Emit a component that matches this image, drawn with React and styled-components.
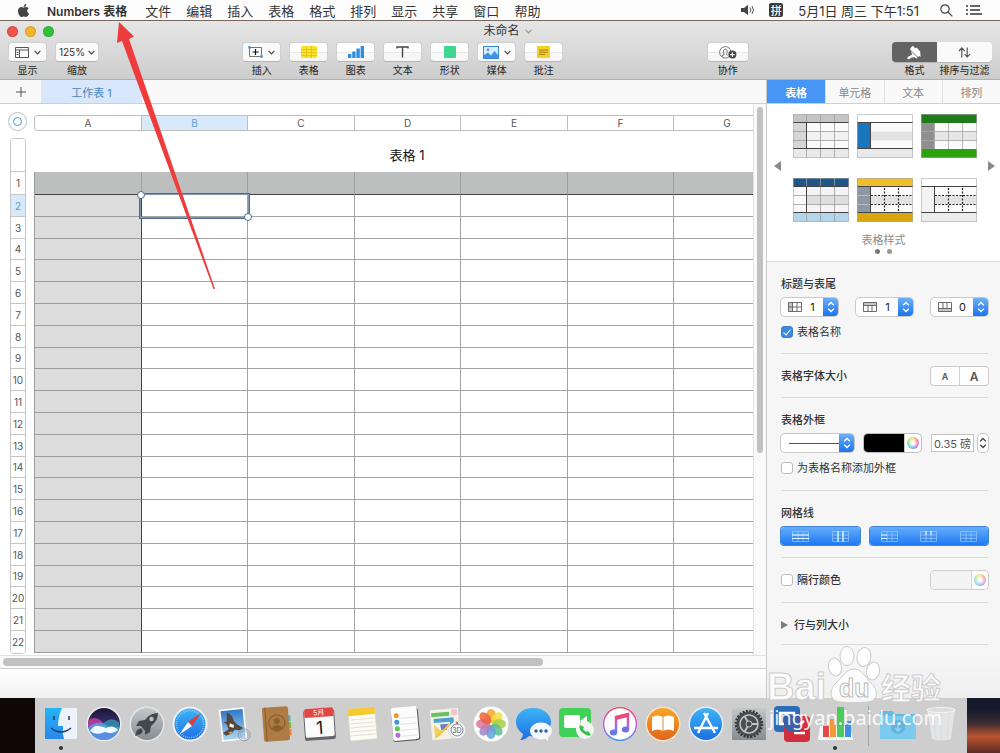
import React, {useState} from 'react';
import styled, {createGlobalStyle} from 'styled-components';
import {FaApple} from 'react-icons/fa';

const MENUS = ['文件', '编辑', '插入', '表格', '格式', '排列', '显示', '共享', '窗口', '帮助'];
const COLUMNS = [
  {name: 'A', width: 107},
  {name: 'B', width: 106},
  {name: 'C', width: 107},
  {name: 'D', width: 106},
  {name: 'E', width: 107},
  {name: 'F', width: 106},
  {name: 'G', width: 107},
];
// the 125% zoom makes every fifth row one pixel shorter
const rowHeight = (n) => (n === 1 ? 23 : n % 5 === 4 ? 21 : 22);
const ROWS = Array.from({length: 22}, (_, i) => ({n: i + 1, height: rowHeight(i + 1)}));

const Chevron = ({color = '#444'}) => (
  <svg width="7" height="5" viewBox="0 0 7 5" fill="none" stroke={color} strokeWidth="1.2">
    <path d="M.6 .8 3.5 3.8 6.4 .8"/>
  </svg>
);

const UpDown = ({color = '#fff'}) => (
  <svg width="8" height="12" viewBox="0 0 8 12" fill="none" stroke={color} strokeWidth="1.3">
    <path d="M1.2 4.3 4 1.5 6.8 4.3M1.2 7.7 4 10.5 6.8 7.7"/>
  </svg>
);

const ICONS = {
  view: (
    <svg width="14" height="11" viewBox="0 0 14 11" fill="none" stroke="#555">
      <path d="M.5 .5H13.5V10.5H.5ZM.5 3H13.5M4.5 3V10.5M1.5 5.5H3.5M1.5 7.5H3.5"/>
    </svg>
  ),
  insert: (
    <svg width="15" height="12" viewBox="0 0 15 12" fill="none">
      <path d="M1.5 1.5H13.5V10.5H1.5Z" stroke="#777"/>
      <path d="M7.5 3V9M4.5 6H10.5" stroke="#111" strokeWidth="1.2"/>
      <circle cx="1.5" cy="1.5" r="1.4" fill="#4a90d9"/>
      <circle cx="13.5" cy="10.5" r="1.4" fill="#4a90d9"/>
    </svg>
  ),
  table: (
    <svg width="16" height="12" viewBox="0 0 16 12">
      <rect width="16" height="12" rx="1" fill="#fbe22d"/>
      <path d="M0 3.5H16M0 6.5H16M0 9.5H16M5.5 0V12M10.5 0V12" stroke="#dfc010" strokeWidth=".8"/>
    </svg>
  ),
  chart: (
    <svg width="16" height="12" viewBox="0 0 16 12" fill="#2f8fdc">
      <rect x="0" y="8" width="3.4" height="4"/>
      <rect x="4.2" y="5.5" width="3.4" height="6.5"/>
      <rect x="8.4" y="2.5" width="3.4" height="9.5"/>
      <rect x="12.6" y="0" width="3.4" height="12"/>
    </svg>
  ),
  text: (
    <svg width="13" height="12" viewBox="0 0 13 12" fill="none" stroke="#444" strokeWidth="1.4">
      <path d="M1 2.6V1H12V2.6M6.5 1V11.5"/>
    </svg>
  ),
  shape: (
    <svg width="12" height="12" viewBox="0 0 12 12">
      <rect width="12" height="12" rx="1" fill="#3fd692"/>
    </svg>
  ),
  media: (
    <svg width="16" height="13" viewBox="0 0 16 13">
      <rect x=".5" y=".5" width="15" height="12" fill="#d9ecfb" stroke="#3b86d1"/>
      <path d="M1 12V9L5 6.5 8 9.5 11.5 5 15 9V12Z" fill="#3f93e6"/>
      <circle cx="5" cy="3.8" r="1.3" fill="#3f93e6"/>
    </svg>
  ),
  comment: (
    <svg width="13" height="12" viewBox="0 0 13 12">
      <rect width="13" height="12" rx="1" fill="#f5cf2b"/>
      <path d="M2 4H11M2 6.2H11M2 8.4H8" stroke="#a8820a" strokeWidth="1"/>
    </svg>
  ),
  collab: (
    <svg width="18" height="13" viewBox="0 0 18 13" fill="none">
      <circle cx="6.3" cy="6.3" r="5.7" stroke="#777"/>
      <path d="M3 11V9.6L5 8.7 4.4 4.5Q6.3 1.5 8.2 4.5L7.7 8.7 8.5 9.3" stroke="#777"/>
      <circle cx="13.4" cy="8.6" r="4" fill="#444"/>
      <path d="M13.4 6.3V10.9M11.1 8.6H15.7" stroke="#fff" strokeWidth="1.2"/>
    </svg>
  ),
  brush: (
    <svg width="16" height="15" viewBox="0 0 16 15" fill="#fff">
      <path d="M5 2.4 6.8 .8 9.4 3.6 10.6 2.6 14.2 6.4 14.6 12 12.8 10.8 12.4 12.2 4 4.6Z"/>
      <path d="M4.6 5.8 11.4 12.2 10.4 13.4 8.8 12.2 5.4 12.6 3 14.4 .8 13.2 2.4 11.4 5.2 10.2 6.2 9Z"/>
    </svg>
  ),
  sort: (
    <svg width="13" height="11" viewBox="0 0 13 11" fill="none" stroke="#555" strokeWidth="1.2">
      <path d="M3.8 10.5V1M1 4 3.8 1 6.6 4M9.2 .5V10M6.6 7.2 9.2 10 12 7.2"/>
    </svg>
  ),
};

const INSERTS = [
  {icon: 'insert', label: '插入', menu: true},
  {icon: 'table', label: '表格'},
  {icon: 'chart', label: '图表'},
  {icon: 'text', label: '文本'},
  {icon: 'shape', label: '形状'},
  {icon: 'media', label: '媒体', menu: true},
  {icon: 'comment', label: '批注'},
];

const STYLES = [
  {name: '灰色', head: '#c4c4c4', side: '#d6d6d6', body: '#fafafa', alt: '#f2f2f2', foot: '#e9e9e9', lines: 'all'},
  {name: '蓝色侧栏', head: '#ffffff', side: '#1b75bb', body: '#fafafa', alt: '#e3e3e3', foot: '#e9e9e9', lines: 'none'},
  {name: '绿色', head: '#1f7a1c', side: '#8f8f8f', body: '#fafafa', alt: '#e6e6e6', foot: '#2ba30e', lines: 'inner'},
  {name: '深蓝', head: '#1f5688', side: '#fafafa', body: '#f4f4f4', alt: '#dedede', foot: '#b5d5ec', lines: 'all'},
  {name: '黄色', head: '#f0bd2d', side: '#8e98a5', body: '#fafafa', alt: '#e3e3e3', foot: '#dba711', lines: 'dots'},
  {name: '简洁', head: '#ffffff', side: '#f3f3f3', body: '#fafafa', alt: '#e3e3e3', foot: '#ececec', lines: 'dots'},
];

const StyleArt = ({s}) => (
  <svg width="56" height="44" viewBox="0 0 56 44">
    <rect width="56" height="44" fill={s.body}/>
    <rect width="56" height="9" fill={s.head}/>
    <rect x="13" y="17.5" width="43" height="9" fill={s.alt}/>
    <rect y="9" width="13.5" height="26" fill={s.side}/>
    <rect y="35" width="56" height="9" fill={s.foot}/>
    {s.lines === 'all' && (
      <path d="M13.5 0V44M27.5 0V44M41.5 0V44M0 17.5H56M0 26.5H56" stroke="#9d9d9d" strokeWidth=".8"/>
    )}
    {s.lines === 'inner' && (
      <path d="M13.5 9V35M27.5 9V35M41.5 9V35M0 17.5H56M0 26.5H56" stroke="#a5a5a5" strokeWidth=".8"/>
    )}
    {s.lines === 'dots' && (
      <>
        <path d="M0 17.5H13M0 26.5H13" stroke={s.head === '#ffffff' ? '#f3f3f3' : '#c4c4c4'} strokeWidth=".8"/>
        <path
          d="M27.5 10V35M41.5 10V35M14 17.5H56M14 26.5H56"
          stroke="#222"
          fill="none"
          strokeDasharray="2 1.5"
          strokeWidth="1.2"
        />
      </>
    )}
    {s.lines !== 'inner' && <path d="M0 8.5H56M0 34.5H56M13.5 9V35" stroke="#444" strokeWidth="1"/>}
    <rect x=".5" y=".5" width="55" height="43" fill="none" stroke="#aaa" strokeOpacity=".6"/>
  </svg>
);

const PART_ICONS = {
  side: 'M.5 .5H13.5V9.5H.5ZM.5 5H13.5M4.5 .5V9.5M9 .5V9.5',
  top: 'M.5 .5H13.5V9.5H.5ZM.5 3.5H13.5M5 3.5V9.5M9 3.5V9.5',
  bottom: 'M.5 .5H13.5V9.5H.5ZM.5 6.5H13.5M5 .5V6.5M9 .5V6.5',
};
const PART_FILLS = {
  side: 'M.5 .5H4.5V9.5H.5Z',
  top: 'M.5 .5H13.5V3.5H.5Z',
  bottom: 'M.5 6.5H13.5V9.5H.5Z',
};

const PartIcon = ({part}) => (
  <svg width="14" height="10" viewBox="0 0 14 10">
    <path d={PART_FILLS[part]} fill="#c6c6c6"/>
    <path d={PART_ICONS[part]} fill="none" stroke="#5c5c5c" strokeWidth=".9"/>
  </svg>
);

const GRID_MARKS = {
  rows: 'M0 4H17M0 7.5H17',
  cols: 'M6 0V11M11 0V11',
  sideRows: 'M0 4H6M0 7.5H6',
  headCols: 'M6 0V4M11 0V4',
  none: '',
};

const GridIcon = ({kind}) => (
  <svg width="17" height="11" viewBox="0 0 17 11" fill="none">
    <path
      d="M.5 .5H16.5V10.5H.5ZM.5 4H16.5M.5 7.5H16.5M6 .5V10.5M11 .5V10.5"
      stroke="#a9d0ff"
      strokeOpacity=".65"
      strokeWidth=".9"
    />
    <path d={GRID_MARKS[kind]} stroke="#e6fbff" strokeWidth="1.2"/>
  </svg>
);

const petals = ['#f7a325', '#f5dd3c', '#a8cf45', '#5ebd8e', '#5aa5dc', '#9b86c9', '#d9749d', '#ee5f3e'];

const DOCK = [
  {
    name: 'Finder', running: true, art: (
      <>
        <rect x="2" y="2" width="32" height="31" rx="1" fill="#edf2fa"/>
        <path d="M2 2H19Q15 11 15 20H20Q19 27 21 33H2Z" fill="url(#finder)"/>
        <path d="M11 10V14M26 10V14" stroke="#173f66" strokeWidth="1.5"/>
        <path d="M8 22Q18 30 28 22" stroke="#173f66" strokeWidth="1.5" fill="none"/>
      </>
    ),
  },
  {
    name: 'Siri', art: (
      <>
        <circle cx="18" cy="18" r="17.5" fill="#eee"/>
        <circle cx="18" cy="18" r="16" fill="url(#siri)"/>
        <path d="M2.5 14Q12 8 20 21L10 23 2 20Z" fill="#d83fa6" opacity=".75"/>
        <path d="M2.2 21Q13 13 20 19T33.8 20Q31 34 18 34 5 34 2.2 21Z" fill="#5c9cf0" opacity=".85"/>
        <path d="M14 21Q24 8 33.5 17L32 23Z" fill="#37b8c4" opacity=".6"/>
        <path d="M4 25Q8 19 13 20T20 22Q27 18 32 24 27 29 19 26 10 30 4 25Z" fill="#effcff"/>
      </>
    ),
  },
  {
    name: 'Launchpad', art: (
      <>
        <circle cx="18" cy="18" r="17.5" fill="#e5e5e5"/>
        <circle cx="18" cy="18" r="16" fill="url(#silver)"/>
        <path d="M29 7Q21 7 16 14L10 15 7 20 12 20 16 25 16 29 21 26 22 20Q29 15 29 7Z" fill="#43484d"/>
        <circle cx="22.5" cy="13" r="2.2" fill="#b9c0c4"/>
        <path d="M12 22 8 24 6 30 12 28 14 25Z" fill="#43484d"/>
      </>
    ),
  },
  {
    name: 'Safari', art: (
      <>
        <circle cx="18" cy="18" r="17.5" fill="#eef1f3"/>
        <circle cx="18" cy="18" r="15.5" fill="url(#blue)"/>
        <circle cx="18" cy="18" r="13.5" fill="none" stroke="#cfe8fb" strokeWidth="1.5" strokeDasharray=".6 1.5"/>
        <path d="M29 7 20 20 16 16Z" fill="#e53b36"/>
        <path d="M7 29 16 16 20 20Z" fill="#f5f5f5"/>
      </>
    ),
  },
  {
    name: 'Mail', art: (
      <g transform="rotate(-6 18 18)">
        <rect x="5" y="2" width="26" height="33" fill="#fafafa" stroke="#c9c9c9" strokeWidth=".5"/>
        <rect x="7" y="4" width="22" height="29" fill="url(#sky)"/>
        <path d="M13 6Q18 8 19 15L22 19 28 23 24 25 19 24 16 27 10 29 7 26 13 23 12 18 9 15 12 15Z" fill="#54463a"/>
        <path d="M15 17 19 19 18 22 14 20Z" fill="#f4efe2"/>
        <path d="M12 26 17 25 15 28Z" fill="#d8a23a"/>
        <circle cx="28" cy="30" r="6" fill="none" stroke="#8794a4" strokeWidth=".8"/>
        <circle cx="28" cy="30" r="4" fill="none" stroke="#8794a4" strokeWidth=".6"/>
      </g>
    ),
  },
  {
    name: '通讯录', art: (
      <g transform="rotate(-4 18 18)">
        <path d="M30 10H33V16H30Z" fill="#53b4d9"/>
        <path d="M30 17H33V23H30Z" fill="#72c044"/>
        <path d="M30 24H33V30H30Z" fill="#f08b2d"/>
        <rect x="5" y="1" width="26" height="34" rx="2" fill="#ad7b43"/>
        <path d="M8 1V35" stroke="#8b5d2b"/>
        <circle cx="19" cy="17" r="8" fill="none" stroke="#8b602f" strokeWidth="1.2"/>
        <circle cx="19" cy="15" r="3" fill="#8b602f"/>
        <path d="M13 22Q19 16 25 22 19 27 13 22Z" fill="#8b602f"/>
      </g>
    ),
  },
  {
    name: '日历', art: (
      <g transform="rotate(-4 18 18)">
        <rect x="3" y="4" width="31" height="30" rx="2" fill="#62666b"/>
        <rect x="4" y="2" width="29" height="29" rx="2" fill="#fbfbfb"/>
        <path d="M4 11V4Q4 2 6 2H31Q33 2 33 4V11Z" fill="#e24644"/>
        <text x="18.5" y="9" fontSize="7" fill="#fff" textAnchor="middle">5月</text>
        <text x="18.5" y="28" fontSize="18" fill="#222" textAnchor="middle">1</text>
      </g>
    ),
  },
  {
    name: '备忘录', art: (
      <g transform="rotate(-5 18 18)">
        <rect x="5" y="2" width="27" height="32" fill="#fdfcf4" stroke="#d5d0bd" strokeWidth=".6"/>
        <path d="M5 2H32V9H5Z" fill="#f6c92f"/>
        <path d="M6 13H31M6 17H31M6 21H31M6 25H31M6 29H31" stroke="#d9d6ca" strokeWidth=".7"/>
      </g>
    ),
  },
  {
    name: '提醒事项', art: (
      <g transform="rotate(-5 18 18)">
        <rect x="5" y="3" width="27" height="32" rx="2" fill="#555"/>
        <rect x="5" y="1" width="26" height="33" rx="2" fill="#fcfcfc"/>
        <path d="M13 12H30M13 18H30M13 24H30M13 30H30" stroke="#d9d9d9" strokeWidth=".7"/>
        <circle cx="10" cy="9" r="2.5" fill="#ef962e"/>
        <circle cx="10" cy="15.5" r="2.5" fill="#3b98e3"/>
        <circle cx="10" cy="22" r="2.5" fill="#56c756"/>
        <circle cx="10" cy="28.5" r="2.5" fill="#b668dc"/>
      </g>
    ),
  },
  {
    name: '地图', art: (
      <>
        <g transform="rotate(-5 16 18)">
          <rect x="1" y="3" width="28" height="30" fill="#f4f2e7"/>
          <path d="M2 6H20V10H2Z" fill="#6bbf62"/>
          <path d="M4 12H24V26H20V16H4Z" fill="#4ca3cf"/>
          <path d="M4 18 12 26 4 32Z" fill="#f3d05a"/>
          <path d="M10 18H18L16 24H11Z" fill="#6c7dd0"/>
          <path d="M22 4H28V10H22Z" fill="#f1c5ce"/>
          <path d="M6 30 20 18" stroke="#f3c33e" strokeWidth="2"/>
        </g>
        <circle cx="27" cy="24" r="8.5" fill="#f5f7f8" stroke="#c9cdd0" strokeWidth=".6"/>
        <circle cx="27" cy="24" r="6" fill="none" stroke="#5b6e7d" strokeWidth=".8"/>
        <text x="27" y="26.5" fontSize="7" fill="#4c5f70" textAnchor="middle">3D</text>
        <circle cx="27" cy="17" r="1" fill="#d33"/>
      </>
    ),
  },
  {
    name: '照片', art: (
      <>
        <circle cx="18" cy="18" r="17.5" fill="#fafafa"/>
        {petals.map((c, i) => (
          <ellipse key={c} cx="18" cy="10" rx="4.8" ry="7" fill={c} opacity=".85" transform={`rotate(${i * 45} 18 18)`}/>
        ))}
      </>
    ),
  },
  {
    name: '信息', art: (
      <>
        <path d="M17 2C7 2 0 8 0 16 0 21 3 25 7 28 7 31 5 33 4 34 8 34 11 32 13 30 27 32 35 24 35 16 35 8 27 2 17 2Z" fill="url(#blue)"/>
        <ellipse cx="25" cy="25" rx="11" ry="8.5" fill="#f3f8fd"/>
        <path d="M28 31 32 35 32 29Z" fill="#f3f8fd"/>
        <circle cx="20" cy="25" r="1.7" fill="#2f5f9c"/>
        <circle cx="25" cy="25" r="1.7" fill="#2f5f9c"/>
        <circle cx="30" cy="25" r="1.7" fill="#2f5f9c"/>
      </>
    ),
  },
  {
    name: 'FaceTime', art: (
      <>
        <rect x="0" y="2" width="32" height="29" rx="4" fill="#3fd158"/>
        <rect x="5" y="9" width="16" height="13" rx="2" fill="#fff"/>
        <path d="M21 15 28 10V20Z" fill="#fff"/>
        <circle cx="26" cy="24" r="9" fill="#f3f6f3"/>
        <path d="M21 19Q19 23 24 27T32 29L29 25 27 26 24 23 25 21Z" fill="#36bf4d"/>
      </>
    ),
  },
  {
    name: 'iTunes', art: (
      <>
        <circle cx="18" cy="18" r="17.5" fill="#fff"/>
        <circle cx="18" cy="18" r="16.5" fill="none" stroke="url(#tunes)" strokeWidth="1.6"/>
        <path d="M14 26V11L26 8V23" fill="none" stroke="url(#tunes)" strokeWidth="2.5"/>
        <path d="M14 10 26 7V11L14 14Z" fill="#eb4b77"/>
        <ellipse cx="11.5" cy="26.5" rx="3.7" ry="3" fill="#6b79e8"/>
        <ellipse cx="23.5" cy="23.5" rx="3.7" ry="3" fill="#7573e0"/>
      </>
    ),
  },
  {
    name: 'iBooks', art: (
      <>
        <circle cx="18" cy="18" r="17.5" fill="#f5e3cc"/>
        <circle cx="18" cy="18" r="16" fill="url(#orange)"/>
        <path d="M7 11Q13 8 18 11 23 8 29 11V25Q23 22 18 25 13 22 7 25Z" fill="#fff"/>
        <path d="M18 11V25" stroke="#e58a2c"/>
      </>
    ),
  },
  {
    name: 'App Store', art: (
      <>
        <circle cx="18" cy="18" r="17.5" fill="#e6eef6"/>
        <circle cx="18" cy="18" r="16" fill="url(#blue)"/>
        <path d="M20 7 10 27M16 7 27 27M6 22H30" stroke="#fff" strokeWidth="2.4" fill="none"/>
      </>
    ),
  },
  {
    name: '系统偏好设置', art: (
      <>
        <rect x="1" y="2" width="34" height="32" rx="1" fill="url(#silver)"/>
        <circle cx="18" cy="18" r="12.5" fill="#4b4e51"/>
        <circle cx="18" cy="18" r="13" fill="none" stroke="#35383a" strokeWidth="2.5" strokeDasharray="2 1.4"/>
        <circle cx="18" cy="18" r="9" fill="none" stroke="#bfc4c8" strokeWidth="1.5"/>
        <path d="M18 18H27M18 18 13.5 10M18 18 13.5 26" stroke="#bfc4c8" strokeWidth="1.8"/>
        <circle cx="18" cy="18" r="3" fill="#46494c" stroke="#bfc4c8"/>
      </>
    ),
  },
  {
    name: '远程桌面', art: (
      <>
        <rect x="0" y="0" width="26" height="26" rx="4" fill="#2a6db8"/>
        <path d="M6 7H20V18H6Z" fill="none" stroke="#fff" strokeWidth="2.5"/>
        <rect x="10" y="10" width="26" height="26" rx="4" fill="#d22d3c"/>
        <path d="M16 19 20 23 30 15M20 27H31" fill="none" stroke="#fff" strokeWidth="2.5"/>
        <path d="M10 10H26V26H14L10 20Z" fill="#3c5fa8"/>
      </>
    ),
  },
  {
    name: 'Numbers 表格', running: true, art: (
      <>
        <path d="M1 34 3 20H33L36 34Z" fill="#f8f8f8"/>
        <rect x="6" y="20" width="6" height="11" fill="#e5484d"/>
        <rect x="13" y="13" width="6" height="18" fill="#f19a38"/>
        <rect x="20" y="1" width="7" height="30" fill="#4bcb58"/>
        <rect x="28" y="15" width="6" height="16" fill="#3e8ee6"/>
      </>
    ),
  },
];

const PLACES = [
  {
    name: '下载', art: (
      <>
        <path d="M0 5H12L15 8H36V32H0Z" fill="#67b9e4"/>
        <path d="M0 10H36V33H0Z" fill="#7bcaf0"/>
        <circle cx="18" cy="21" r="7" fill="#63b3dd"/>
        <path d="M18 17V25M15 22 18 25 21 22" stroke="#8fd3f3" strokeWidth="1.5" fill="none"/>
      </>
    ),
  },
  {
    name: '废纸篓', art: (
      <>
        <path d="M4 3H32L28 33Q18 36 9 33Z" fill="#e6e7e8" opacity=".9"/>
        <path d="M10 6 13 32M18 6V33M26 6 24 32" stroke="#dadcdd" strokeWidth="1"/>
        <ellipse cx="18" cy="4" rx="14" ry="2.5" fill="#d9dbdc" stroke="#f6f6f6"/>
      </>
    ),
  },
];

const ToolItem = ({icon, label, menu, split, wide}) => (
  <Tool>
    <ToolButton aria-label={label} $split={split} $wide={wide}>
      {ICONS[icon]}
      {menu && <Chevron/>}
    </ToolButton>
    <ToolLabel>{label}</ToolLabel>
  </Tool>
);

const PartSelect = ({part, label, initial}) => {
  const [value, setValue] = useState(initial);

  return (
    <SelectBox>
      <PartIcon part={part}/>
      <PartValue aria-label={label} value={value} onChange={(e) => setValue(e.target.value)}>
        {[0, 1, 2, 3, 4, 5].map((n) => <option key={n} value={n}>{n}</option>)}
      </PartValue>
      <SelectEnd><UpDown/></SelectEnd>
    </SelectBox>
  );
};

const Inspector = () => {
  const [showName, setShowName] = useState(true);
  const [outlineName, setOutlineName] = useState(false);
  const [banded, setBanded] = useState(false);
  const [weight, setWeight] = useState('0.35 磅');

  return (
    <Side>
      <SideTabs>
        <SideTab $active>表格</SideTab>
        <SideTab>单元格</SideTab>
        <SideTab>文本</SideTab>
        <SideTab>排列</SideTab>
      </SideTabs>
      <Gallery>
        <GalleryRow>
          <PageArrow aria-label="上一页">
            <svg width="7" height="10" viewBox="0 0 7 10" fill="#8a8a8a"><path d="M7 0V10L0 5Z"/></svg>
          </PageArrow>
          <Thumbs>
            {STYLES.map((s) => (
              <Thumb key={s.name} aria-label={s.name}><StyleArt s={s}/></Thumb>
            ))}
          </Thumbs>
          <PageArrow aria-label="下一页">
            <svg width="7" height="10" viewBox="0 0 7 10" fill="#8a8a8a"><path d="M0 0V10L7 5Z"/></svg>
          </PageArrow>
        </GalleryRow>
        <GalleryName>表格样式</GalleryName>
        <Dots><Dot $dark/><Dot/></Dots>
      </Gallery>
      <Settings>
        <Group $height={92} $top={14}>
          <Heading>标题与表尾</Heading>
          <Line>
            <PartSelect part="side" label="标题列" initial={1}/>
            <PartSelect part="top" label="标题行" initial={1}/>
            <PartSelect part="bottom" label="表尾行" initial={0}/>
          </Line>
          <CheckLabel>
            <Check type="checkbox" checked={showName} onChange={(e) => setShowName(e.target.checked)}/>
            表格名称
          </CheckLabel>
        </Group>
        <Group $height={44} $top={12}>
          <Line>
            <Heading>表格字体大小</Heading>
            <SizeButtons>
              <SizeButton aria-label="缩小" $size={9}>A</SizeButton>
              <SizeButton aria-label="放大" $size={12}>A</SizeButton>
            </SizeButtons>
          </Line>
        </Group>
        <Group $height={93} $top={14}>
          <Heading>表格外框</Heading>
          <Line>
            <StrokeBox aria-label="外框线型">
              <StrokeSample/>
              <SelectEnd><UpDown/></SelectEnd>
            </StrokeBox>
            <ColorWell aria-label="外框颜色"><Swatch $color="#000"/><Wheel/></ColorWell>
            <Weight>
              <WeightInput aria-label="外框粗细" value={weight} onChange={(e) => setWeight(e.target.value)}/>
              <Stepper aria-label="调整粗细"><UpDown color="#444"/></Stepper>
            </Weight>
          </Line>
          <CheckLabel>
            <Check type="checkbox" checked={outlineName} onChange={(e) => setOutlineName(e.target.checked)}/>
            为表格名称添加外框
          </CheckLabel>
        </Group>
        <Group $height={67} $top={14}>
          <Heading>网格线</Heading>
          <Line>
            <GridButtons $cols={2}>
              <GridButton aria-label="正文行"><GridIcon kind="rows"/></GridButton>
              <GridButton aria-label="正文列"><GridIcon kind="cols"/></GridButton>
            </GridButtons>
            <GridButtons $cols={3}>
              <GridButton aria-label="标题列行线"><GridIcon kind="sideRows"/></GridButton>
              <GridButton aria-label="标题行列线"><GridIcon kind="headCols"/></GridButton>
              <GridButton aria-label="表尾列线"><GridIcon kind="none"/></GridButton>
            </GridButtons>
          </Line>
        </Group>
        <Group $height={45} $top={12}>
          <Line>
            <CheckLabel $bold>
              <Check type="checkbox" checked={banded} onChange={(e) => setBanded(e.target.checked)}/>
              隔行颜色
            </CheckLabel>
            <ColorWell aria-label="隔行颜色" $faint><Swatch $color="#f4f4f4"/><Wheel/></ColorWell>
          </Line>
        </Group>
        <Group $height={42} $top={12}>
          <Disclosure>
            <svg width="7" height="8" viewBox="0 0 7 8" fill="#7d7d7d"><path d="M0 0V8L7 4Z"/></svg>
            行与列大小
          </Disclosure>
        </Group>
      </Settings>
    </Side>
  );
};

const Sheet = () => (
  <Canvas>
    <Corner aria-label="选择表格"><i/></Corner>
    <ColumnStrip>
      {COLUMNS.map((c) => (
        <ColumnHead key={c.name} $width={c.width} $active={c.name === 'B'}>{c.name}</ColumnHead>
      ))}
    </ColumnStrip>
    <RowStrip>
      <RowHead $height={33}/>
      {ROWS.map((r) => (
        <RowHead key={r.n} $height={r.height} $active={r.n === 2}>{r.n}</RowHead>
      ))}
    </RowStrip>
    <TableArea>
      <TableTitle>表格 1</TableTitle>
      <Table>
        <colgroup>
          {COLUMNS.map((c) => <Col key={c.name} $width={c.width}/>)}
        </colgroup>
        <tbody>
          {ROWS.map((r) => (
            <tr key={r.n}>
              {COLUMNS.map((c, i) => {
                const head = r.n === 1;
                const Tag = head || i === 0 ? HeadCell : Cell;
                return (
                  <Tag key={c.name} $height={r.height} $top={head}>
                    {r.n === 2 && c.name === 'B' && <Selection/>}
                  </Tag>
                );
              })}
            </tr>
          ))}
        </tbody>
      </Table>
    </TableArea>
  </Canvas>
);

const DockItem = ({item}) => (
  <DockButton aria-label={item.name}>
    <svg width="36" height="36" viewBox="0 0 36 36" overflow="visible">{item.art}</svg>
    {item.running && <Running/>}
  </DockButton>
);

const App = () => (
  <Page>
    <GlobalStyle/>
    <Gradients width="0" height="0">
      <defs>
        <linearGradient id="finder" x1="0" y1="0" x2="0" y2="1"><stop stopColor="#25b4f5"/><stop offset="1" stopColor="#2a86ec"/></linearGradient>
        <linearGradient id="blue" x1="0" y1="0" x2="0" y2="1"><stop stopColor="#3db4f7"/><stop offset="1" stopColor="#1e6fe3"/></linearGradient>
        <linearGradient id="sky" x1="0" y1="0" x2="0" y2="1"><stop stopColor="#2f79c9"/><stop offset="1" stopColor="#a9d4f2"/></linearGradient>
        <linearGradient id="silver" x1="0" y1="0" x2="0" y2="1"><stop stopColor="#c3c9cb"/><stop offset="1" stopColor="#858b8f"/></linearGradient>
        <linearGradient id="orange" x1="0" y1="0" x2="0" y2="1"><stop stopColor="#f7a623"/><stop offset="1" stopColor="#e2651a"/></linearGradient>
        <linearGradient id="tunes" x1="0" y1="0" x2="0" y2="1"><stop stopColor="#f04a6d"/><stop offset=".5" stopColor="#c25fd6"/><stop offset="1" stopColor="#4a90ee"/></linearGradient>
        <linearGradient id="siri" x1="0" y1="0" x2="0" y2="1"><stop stopColor="#1a1433"/><stop offset="1" stopColor="#4b4fb0"/></linearGradient>
      </defs>
    </Gradients>
    <MenuBar>
      <FaApple size={15} color="#444"/>
      <AppName>Numbers 表格</AppName>
      <Menus>{MENUS.map((m) => <MenuItem key={m}>{m}</MenuItem>)}</Menus>
      <Status>
        <svg width="15" height="12" viewBox="0 0 15 12" fill="#444">
          <path d="M0 4H3L7 .8V11.2L3 8H0Z"/>
          <path d="M9 3.5Q10.8 6 9 8.5M11 2Q14 6 11 10" fill="none" stroke="#555"/>
        </svg>
        <InputBadge>拼</InputBadge>
        <Clock>5月1日 周三 下午1:51</Clock>
        <svg width="13" height="13" viewBox="0 0 13 13" fill="none" stroke="#444" strokeWidth="1.2">
          <circle cx="5" cy="5" r="4.2"/><path d="M8 8 12.3 12.3"/>
        </svg>
        <svg width="16" height="10" viewBox="0 0 16 10" stroke="#333" strokeWidth="1.4">
          <path d="M0 1H2M4 1H14M0 5H2M4 5H14M0 9H2M4 9H16"/>
        </svg>
      </Status>
    </MenuBar>

    <Toolbar>
      <TitleRow>
        <Lights><Light $color="#f0544f"/><Light $color="#f5b32f"/><Light $color="#33c03d"/></Lights>
        <DocTitle>未命名 <Chevron color="#999"/></DocTitle>
      </TitleRow>
      <Tools>
        <ToolGroup>
          <ToolItem icon="view" label="显示" menu/>
          <Tool>
            <ToolButton aria-label="缩放" $wide={44}><span>125%</span><Chevron/></ToolButton>
            <ToolLabel>缩放</ToolLabel>
          </Tool>
        </ToolGroup>
        <ToolGroup>
          {INSERTS.map((t) => <ToolItem key={t.label} {...t} split={!t.menu}/>)}
        </ToolGroup>
        <ToolItem icon="collab" label="协作" wide={42} split/>
        <Switcher>
          <Tool>
            <ModeButton aria-label="格式" $active $wide={45}>{ICONS.brush}</ModeButton>
            <ToolLabel>格式</ToolLabel>
          </Tool>
          <Tool>
            <ModeButton aria-label="排序与过滤" $wide={55}>{ICONS.sort}</ModeButton>
            <ToolLabel>排序与过滤</ToolLabel>
          </Tool>
        </Switcher>
      </Tools>
    </Toolbar>

    <Content>
      <Main>
        <SheetTabs>
          <AddSheet aria-label="添加工作表">
            <svg width="10" height="10" viewBox="0 0 10 10" stroke="#555"><path d="M5 0V10M0 5H10"/></svg>
          </AddSheet>
          <SheetTab>工作表 1</SheetTab>
        </SheetTabs>
        <Work>
          <Sheet/>
          <VScroll><VThumb/></VScroll>
        </Work>
        <HScroll><HThumb/></HScroll>
        <Blank/>
      </Main>
      <Inspector/>
    </Content>

    <Desktop>
      <Dock>
        {DOCK.map((d) => <DockItem key={d.name} item={d}/>)}
        <DockLine/>
        {PLACES.map((d) => <DockItem key={d.name} item={d}/>)}
      </Dock>
    </Desktop>

    <Arrow width="110" height="275" viewBox="0 0 110 275">
      <path d="M9 1 24 15.5 19 18 105 268 103.5 268 12 20 7 22Z" fill="#ee3b3b"/>
    </Arrow>
    <Watermark width="190" height="96" viewBox="0 0 190 96">
      <g fill="#fff" fillOpacity=".85" stroke="#ccc" strokeWidth="1">
        <text x="2" y="55" fontSize="38" fontWeight="700">Bai</text>
        <ellipse cx="70" cy="22" rx="6.5" ry="9" transform="rotate(-12 70 22)"/>
        <ellipse cx="82" cy="11" rx="7" ry="9.5"/>
        <ellipse cx="99" cy="12" rx="7" ry="9.5" transform="rotate(8 99 12)"/>
        <ellipse cx="108" cy="26" rx="6.5" ry="9" transform="rotate(12 108 26)"/>
        <path d="M89 24C97 24 100 32 106 38 115 46 112 57 102 57 96 58 82 58 76 57 65 57 63 46 71 38 78 32 81 24 89 24Z"/>
        <text x="74" y="52" fontSize="25" fontWeight="700" stroke="#bbb">du</text>
        <text x="116" y="54" fontSize="30" fontWeight="700">经验</text>
      </g>
      <WatermarkUrl x="4" y="80">jingyan.baidu.com</WatermarkUrl>
    </Watermark>
  </Page>
);

export default App;

const GlobalStyle = createGlobalStyle`
  * {
    box-sizing: border-box;
  }
  body {
    margin: 0;
    font-family: Inter, "Noto Sans CJK SC", sans-serif;
    font-size: 11px;
    color: #333;
  }
  button, input, select {
    font: inherit;
    color: inherit;
    margin: 0;
    padding: 0;
    border: 0;
    background: none;
  }
  svg {
    flex: none;
    display: block;
  }
`

const Page = styled.div`
  position: relative;
  display: flex;
  flex-direction: column;
  min-height: 100vh;
  overflow: hidden;
  background: #fff;
`

const Gradients = styled.svg`
  position: absolute;
`

const MenuBar = styled.header`
  display: flex;
  align-items: center;
  height: 21px;
  padding: 0 18px 0 16px;
  background: #fdfdfd;
  border-bottom: 1px solid #75665f;
  font-size: 13px;
`

const AppName = styled.strong`
  margin-left: 16px;
  font-size: 12px;
  font-weight: 600;
  white-space: nowrap;
`

const Menus = styled.nav`
  display: flex;
  gap: 15px;
  margin-left: 18px;
`

const MenuItem = styled.button`
  white-space: nowrap;
`

const Status = styled.div`
  display: flex;
  align-items: center;
  gap: 13px;
  margin-left: auto;
`

const InputBadge = styled.span`
  display: flex;
  align-items: center;
  justify-content: center;
  width: 14px;
  height: 14px;
  border-radius: 2px;
  background: #3c3c3c;
  color: #fff;
  font-family: "Noto Sans CJK SC", sans-serif;
  font-size: 11px;
  font-weight: 500;
  line-height: 14px;
`

const Clock = styled.time`
  margin: 0 8px 0 2px;
  font-size: 13px;
  white-space: nowrap;
`

const Toolbar = styled.div`
  height: 59px;
  background: linear-gradient(#e6e6e6, #cdcdcd);
  border-bottom: 1px solid #b0b0b0;
`

const TitleRow = styled.div`
  display: grid;
  grid-template-columns: 1fr auto 1fr;
  align-items: center;
  height: 20px;
  padding-left: 7px;
`

const Lights = styled.div`
  display: flex;
  gap: 7px;
`

const Light = styled.span`
  width: 11px;
  height: 11px;
  border-radius: 50%;
  background: ${({$color}) => $color};
  box-shadow: inset 0 0 0 1px rgba(0, 0, 0, 0.12);
`

const DocTitle = styled.div`
  display: flex;
  align-items: center;
  gap: 5px;
  padding-left: 8px;
  font-size: 12px;
  line-height: 16px;
`

const Tools = styled.div`
  display: flex;
  justify-content: space-between;
  padding: 1px 8px 0;
`

const ToolGroup = styled.div`
  display: flex;
  gap: 8px;
`

const Tool = styled.div`
  display: flex;
  flex-direction: column;
  align-items: center;
`

const ToolButton = styled.button`
  display: flex;
  align-items: center;
  justify-content: center;
  gap: 5px;
  width: ${({$wide}) => $wide || 39}px;
  height: 20px;
  border-radius: 4px;
  border: 1px solid #cfcfcf;
  border-bottom-color: #b5b5b5;
  background: ${({$split}) => ($split ? 'linear-gradient(#fff 50%, #e2e2e2 50%, #f7f7f7 58%)' : '#fafafa')};
  font-size: 10px;

  span {
    margin-right: -2px;
  }
`

const ToolLabel = styled.span`
  font-size: 10px;
  line-height: 16px;
  color: #222;
  white-space: nowrap;
`

const Switcher = styled.div`
  display: flex;
`

const ModeButton = styled.button`
  display: flex;
  align-items: center;
  justify-content: center;
  width: ${({$wide}) => $wide}px;
  height: 20px;
  border-radius: ${({$active}) => ($active ? '4px 0 0 4px' : '0 4px 4px 0')};
  background: ${({$active}) => ($active ? '#636363' : '#fafafa')};
  box-shadow: 0 1px 0 #b5b5b5;
`

const Content = styled.div`
  display: flex;
  flex: 1;
`

const Main = styled.main`
  display: flex;
  flex-direction: column;
  flex: 1;
  min-width: 0;
`

const SheetTabs = styled.div`
  display: flex;
  height: 24px;
  background: #f9f9f9;
  border-bottom: 1px solid #cfcfcf;
`

const AddSheet = styled.button`
  display: flex;
  align-items: center;
  justify-content: center;
  width: 41px;
`

const SheetTab = styled.button`
  width: 101px;
  background: #d9e7fd;
  color: #4a86c0;
`

const Work = styled.div`
  display: flex;
`

const Canvas = styled.div`
  display: grid;
  grid-template-columns: 34px 1fr;
  grid-template-rows: 34px auto;
  flex: 1;
  min-width: 0;
  padding-bottom: 1px;
`

const Corner = styled.button`
  display: flex;
  align-items: center;
  justify-content: center;
  width: 19px;
  height: 19px;
  margin: 8px 0 0 8px;
  border: 1px solid #b9c3cc;
  border-radius: 50%;

  i {
    width: 9px;
    height: 9px;
    border: 1px solid #4e93c7;
    border-radius: 50%;
  }
`

const ColumnStrip = styled.div`
  display: flex;
  height: 16px;
  margin-top: 11px;
  border: 1px solid #bdbdbd;
  border-right: 0;
  border-radius: 4px 0 0 4px;
  overflow: hidden;
`

const ColumnHead = styled.div`
  flex: none;
  width: ${({$width}) => $width}px;
  border-right: 1px solid #bdbdbd;
  background: ${({$active}) => ($active ? '#d7e9fb' : '#fff')};
  color: ${({$active}) => ($active ? '#5c9fd4' : '#555')};
  font-size: 10px;
  line-height: 14px;
  text-align: center;
`

const RowStrip = styled.div`
  width: 16px;
  margin-left: 10px;
  border: 1px solid #c6c6c6;
  border-radius: 4px;
  overflow: hidden;
`

const RowHead = styled.div`
  display: flex;
  align-items: center;
  justify-content: center;
  height: ${({$height}) => $height}px;
  border-bottom: 1px solid #c6c6c6;
  background: ${({$active}) => ($active ? '#d7e9fb' : '#fff')};
  color: ${({$active}) => ($active ? '#5c9fd4' : '#555')};
  font-size: 10px;

  &:last-child {
    border-bottom: 0;
  }
`

const TableArea = styled.section`
  overflow: hidden;
`

const TableTitle = styled.h2`
  width: 746px;
  margin: 0;
  font-size: 13px;
  font-weight: 400;
  line-height: 34px;
  text-align: center;
  color: #111;
`

const Table = styled.table`
  width: 747px;
  table-layout: fixed;
  border-collapse: separate;
  border-spacing: 0;
  border-left: 1px solid #9b9b9b;
`

const Col = styled.col`
  width: ${({$width}) => $width}px;
`

const Cell = styled.td`
  position: relative;
  height: ${({$height}) => $height}px;
  padding: 0;
  border-right: 1px solid #a3a3a3;
  border-bottom: 1px solid #a3a3a3;
  background: #fff;
`

const HeadCell = styled.th`
  height: ${({$height}) => $height}px;
  padding: 0;
  border-right: 1px solid ${({$top}) => ($top ? '#9f9f9f' : '#444')};
  border-bottom: 1px solid ${({$top}) => ($top ? '#444' : '#9b9b9b')};
  background: ${({$top}) => ($top ? '#bdbfbe' : '#dcdcdc')};
`

// selected cell with a drag handle on two corners
const Selection = styled.div`
  position: absolute;
  inset: -2px -3px -3px;
  z-index: 1;
  border: 2px solid #7f99b5;
  outline: 1px solid #4b6c90;
  outline-offset: -1px;

  &:before, &:after {
    content: "";
    position: absolute;
    width: 6px;
    height: 6px;
    border: 1px solid #4b6c90;
    border-radius: 50%;
    background: #fff;
  }
  &:before {
    top: -4px;
    left: -4px;
  }
  &:after {
    right: -4px;
    bottom: -4px;
  }
`

const VScroll = styled.div`
  width: 13px;
  padding: 3px 3px 0;
  border-left: 1px solid #e2e2e2;
  background: #fafafa;
`

const VThumb = styled.div`
  height: 346px;
  border-radius: 4px;
  background: #c1c1c1;
`

const HScroll = styled.div`
  height: 14px;
  padding: 2px 3px;
  border-top: 1px solid #e2e2e2;
  border-bottom: 1px solid #cfcfcf;
  background: #fafafa;
`

const HThumb = styled.div`
  width: 71%;
  height: 8px;
  border-radius: 4px;
  background: #c1c1c1;
`

const Blank = styled.div`
  flex: 1;
  background: linear-gradient(#fff, #f1f1f1);
`

const Side = styled.aside`
  display: flex;
  flex-direction: column;
  width: 234px;
  border-left: 1px solid #c9c9c9;
  background: #f6f6f6;
`

const SideTabs = styled.div`
  display: grid;
  grid-template-columns: repeat(4, 1fr);
  height: 24px;
  border-bottom: 1px solid #cfcfcf;
`

const SideTab = styled.button`
  border-left: 1px solid #dedede;
  background: ${({$active}) => ($active ? '#4695f7' : '#f9f9f9')};
  color: ${({$active}) => ($active ? '#fff' : '#888')};
  font-weight: ${({$active}) => ($active ? 700 : 400)};

  &:first-child {
    border-left: 0;
  }
`

const Gallery = styled.section`
  height: 158px;
  padding-top: 10px;
  border-bottom: 1px solid #dcdcdc;
  background: #fff;
`

const GalleryRow = styled.div`
  display: flex;
  justify-content: space-between;
  padding: 0 5px 0 7px;
`

const PageArrow = styled.button`
  display: flex;
  align-items: center;
  height: 104px;
`

const Thumbs = styled.div`
  display: grid;
  grid-template-columns: repeat(3, 56px);
  gap: 20px 8px;
`

const Thumb = styled.button`
  height: 44px;
`

const GalleryName = styled.div`
  margin-top: 10px;
  line-height: 16px;
  text-align: center;
  color: #8c8c8c;
`

const Dots = styled.div`
  display: flex;
  justify-content: center;
  gap: 7px;
  margin-top: 1px;
`

const Dot = styled.span`
  width: 5px;
  height: 5px;
  border-radius: 50%;
  background: ${({$dark}) => ($dark ? '#777' : '#999')};
`

const Settings = styled.div`
  flex: 1;
  padding: 0 12px 0 14px;
  background: linear-gradient(#f6f6f6 90%, #efefef);
`

const Group = styled.section`
  display: flex;
  flex-direction: column;
  gap: 5px;
  height: ${({$height}) => $height}px;
  padding-top: ${({$top}) => $top}px;
  border-bottom: 1px solid #dadada;
`

const Heading = styled.h3`
  margin: 0;
  font-size: 11px;
  font-weight: 500;
  line-height: 16px;
`

const Line = styled.div`
  display: flex;
  align-items: center;
  justify-content: space-between;
  height: 20px;
`

const SelectBox = styled.div`
  display: flex;
  align-items: center;
  width: 57px;
  height: 18px;
  padding-left: 7px;
  border-radius: 4px;
  background: #fff;
  box-shadow: 0 0 0 1px #c9c9c9;
  overflow: hidden;
`

const PartValue = styled.select`
  flex: 1;
  min-width: 0;
  appearance: none;
  text-align: center;
  color: #222;
`

const SelectEnd = styled.span`
  display: flex;
  align-items: center;
  justify-content: center;
  width: 15px;
  height: 100%;
  background: linear-gradient(#6cb0f8, #1b73ec);
`

const CheckLabel = styled.label`
  display: flex;
  align-items: center;
  gap: 4px;
  line-height: 20px;
  font-weight: ${({$bold}) => ($bold ? 500 : 400)};
`

const Check = styled.input`
  appearance: none;
  width: 12px;
  height: 12px;
  border: 1px solid #bcbcbc;
  border-radius: 3px;
  background: #fff;

  &:checked {
    border-color: #3c7fd0;
    background: #3f8ae0;
  }
  &:checked:after {
    content: "";
    display: block;
    width: 3px;
    height: 6px;
    margin: 1px 0 0 3px;
    border: solid #fff;
    border-width: 0 1px 1px 0;
    transform: rotate(40deg);
  }
`

const SizeButtons = styled.div`
  display: flex;
  width: 57px;
  height: 18px;
  border-radius: 3px;
  background: #fff;
  box-shadow: 0 0 0 1px #c9c9c9;
`

const SizeButton = styled.button`
  flex: 1;
  font-size: ${({$size}) => $size}px;
  font-weight: 600;
  color: #555;

  & + & {
    border-left: 1px solid #d5d5d5;
  }
`

const StrokeBox = styled.button`
  display: flex;
  align-items: center;
  width: 73px;
  height: 18px;
  padding-left: 8px;
  border-radius: 4px;
  background: #fff;
  box-shadow: 0 0 0 1px #c9c9c9;
  overflow: hidden;
`

const StrokeSample = styled.span`
  flex: 1;
  height: 1px;
  background: #555;
`

const ColorWell = styled.button`
  display: flex;
  align-items: center;
  width: 57px;
  height: 18px;
  padding-right: 2px;
  border-radius: 4px;
  background: #fff;
  box-shadow: 0 0 0 1px #bdbdbd;
  overflow: hidden;
  opacity: ${({$faint}) => ($faint ? 0.7 : 1)};
`

const Swatch = styled.span`
  flex: 1;
  height: 100%;
  margin-right: 2px;
  border-right: 1px solid #c9c9c9;
  background: ${({$color}) => $color};
`

const Wheel = styled.span`
  width: 12px;
  height: 12px;
  border-radius: 50%;
  background: radial-gradient(#fff 15%, transparent 75%), conic-gradient(#f5d83a, #f2675b, #dd62c8, #7d6ff0, #4fb4f2, #52d69a, #a5de4e, #f5d83a);
`

const Weight = styled.div`
  display: flex;
  gap: 4px;
`

const WeightInput = styled.input`
  width: 43px;
  height: 18px;
  border: 1px solid #c4c4c4;
  background: #fff;
  text-align: center;
  color: #555;
`

const Stepper = styled.button`
  display: flex;
  align-items: center;
  justify-content: center;
  width: 10px;
  height: 18px;
  border-radius: 4px;
  background: #fff;
  box-shadow: 0 0 0 1px #c4c4c4;
`

const GridButtons = styled.div`
  display: grid;
  grid-template-columns: repeat(${({$cols}) => $cols}, 1fr);
  width: ${({$cols}) => ($cols === 2 ? 79 : 118)}px;
  height: 18px;
  border-radius: 3px;
  background: linear-gradient(#66adfb, #1d78f5);
  box-shadow: 0 0 0 1px #4285d6;
`

const GridButton = styled.button`
  display: flex;
  align-items: center;
  justify-content: center;
`

const Disclosure = styled.button`
  display: flex;
  align-items: center;
  gap: 6px;
  line-height: 20px;
  font-weight: 500;
`

const Desktop = styled.footer`
  padding: 0 33px 0 35px;
  background:
    linear-gradient(90deg, #0e0706 50%, transparent 50%),
    linear-gradient(#141a2b 20%, #3a2a33 45%, #b9552f 70%, #5b2a25);
`

const Dock = styled.div`
  display: flex;
  gap: 7px;
  height: 55px;
  padding: 8px 7px 0 8px;
  background: #cecece;
`

const DockButton = styled.button`
  display: flex;
  flex-direction: column;
  align-items: center;
  gap: 4px;
  width: 36px;
`

const Running = styled.span`
  width: 4px;
  height: 4px;
  border-radius: 50%;
  background: #333;
`

const DockLine = styled.span`
  flex: none;
  width: 1px;
  height: 40px;
  margin: 0 4px 0 8px;
  background: #a3a3a3;
`

const Arrow = styled.svg`
  position: absolute;
  top: 21px;
  left: 110px;
  z-index: 2;
  pointer-events: none;
`

const Watermark = styled.svg`
  position: absolute;
  top: 645px;
  left: 765px;
  z-index: 2;
  font-family: "Liberation Sans", "Noto Sans CJK SC", sans-serif;
  pointer-events: none;
`

const WatermarkUrl = styled.text`
  font-family: "Noto Sans", sans-serif;
  font-size: 20px;
  fill: #fff;
  fill-opacity: 0.9;
`
